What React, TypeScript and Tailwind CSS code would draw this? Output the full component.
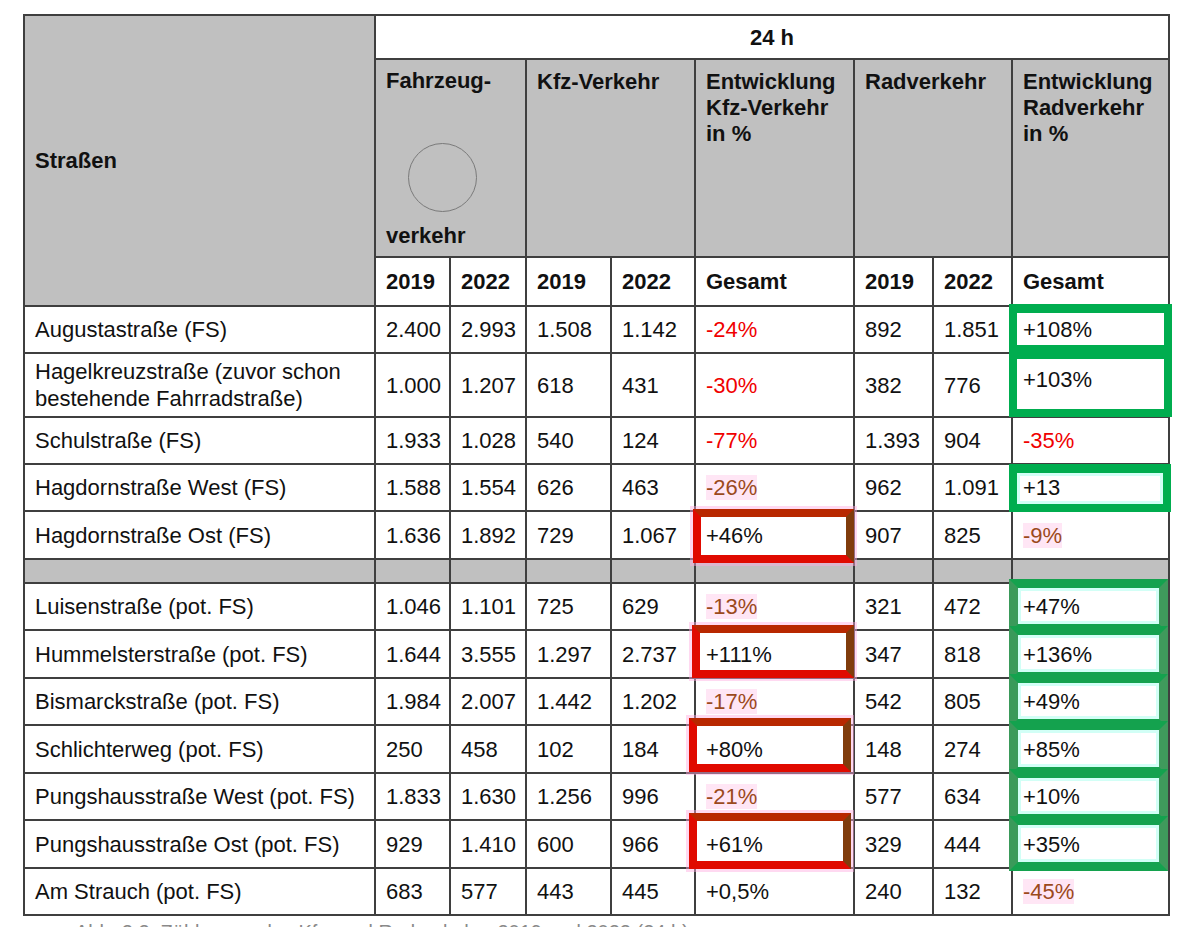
const RED = "text-[#f00000]";
const BROWN = "text-[#9b4a1c] bg-[#ffe6f5]";

const redBox =
  "border-[8px] border-[#e00a00] border-t-[#b82800] border-r-[#803c0c] shadow-[0_0_0_3px_rgba(255,170,225,0.45)]";
const greenBox = "border-[8px] border-t-[9px] border-[#00ad4f]";
const greenGroup =
  "border-[9px] border-[#14a24e] border-l-[#3a9a5a] border-r-[#3f9a5c] shadow-[inset_0_0_0_3px_#d2fff6]";

type Row = {
  name: string;
  vals: string[];
  kfz: string;
  kfzTone?: string;
  kfzBox?: string;
  rad: string[];
  gesamt: string;
  radTone?: string;
  radBox?: string;
  radTop?: boolean;
  h: string;
};

const topRows: Row[] = [
  { name: "Augustastraße (FS)", vals: ["2.400", "2.993", "1.508", "1.142"], kfz: "-24%", kfzTone: RED, rad: ["892", "1.851"], gesamt: "+108%", radBox: `${greenBox} left-[-4px] right-[-4px] top-[-3px] bottom-[-1px]`, h: "h-[47px]" },
  { name: "Hagelkreuzstraße (zuvor schon bestehende Fahrradstraße)", vals: ["1.000", "1.207", "618", "431"], kfz: "-30%", kfzTone: RED, rad: ["382", "776"], gesamt: "+103%", radBox: `${greenBox} left-[-4px] right-[-4px] top-[-4px] bottom-[-1px]`, radTop: true, h: "h-[64px]" },
  { name: "Schulstraße (FS)", vals: ["1.933", "1.028", "540", "124"], kfz: "-77%", kfzTone: RED, rad: ["1.393", "904"], gesamt: "-35%", radTone: RED, h: "h-[47px]" },
  { name: "Hagdornstraße West (FS)", vals: ["1.588", "1.554", "626", "463"], kfz: "-26%", kfzTone: BROWN, rad: ["962", "1.091"], gesamt: "+13", radBox: `${greenBox} left-[-4px] right-[-3px] top-[-1px] bottom-[-2px] shadow-[inset_0_0_0_3px_#d2fff6]`, h: "h-[47px]" },
  { name: "Hagdornstraße Ost (FS)", vals: ["1.636", "1.892", "729", "1.067"], kfz: "+46%", kfzBox: `${redBox} left-[-3px] right-[-1px] top-[-3px] bottom-[-5px]`, rad: ["907", "825"], gesamt: "-9%", radTone: BROWN, h: "h-[48px]" },
];

const bottomRows: Row[] = [
  { name: "Luisenstraße (pot. FS)", vals: ["1.046", "1.101", "725", "629"], kfz: "-13%", kfzTone: BROWN, rad: ["321", "472"], gesamt: "+47%", radBox: `${greenGroup} left-[-4px] right-[0px] top-[-5px] bottom-[-4px]`, h: "h-[47px]" },
  { name: "Hummelsterstraße (pot. FS)", vals: ["1.644", "3.555", "1.297", "2.737"], kfz: "+111%", kfzBox: `${redBox} left-[-4px] right-[-1px] top-[-6px] bottom-[-1px]`, rad: ["347", "818"], gesamt: "+136%", radBox: `${greenGroup} left-[-4px] right-[0px] top-[-5px] bottom-[-4px]`, h: "h-[48px]" },
  { name: "Bismarckstraße (pot. FS)", vals: ["1.984", "2.007", "1.442", "1.202"], kfz: "-17%", kfzTone: BROWN, rad: ["542", "805"], gesamt: "+49%", radBox: `${greenGroup} left-[-4px] right-[0px] top-[-5px] bottom-[-4px]`, h: "h-[47px]" },
  { name: "Schlichterweg (pot. FS)", vals: ["250", "458", "102", "184"], kfz: "+80%", kfzBox: `${redBox} left-[-7px] right-[2px] top-[-8px] bottom-[0px]`, rad: ["148", "274"], gesamt: "+85%", radBox: `${greenGroup} left-[-4px] right-[0px] top-[-5px] bottom-[-4px]`, h: "h-[48px]" },
  { name: "Pungshausstraße West (pot. FS)", vals: ["1.833", "1.630", "1.256", "996"], kfz: "-21%", kfzTone: BROWN, rad: ["577", "634"], gesamt: "+10%", radBox: `${greenGroup} left-[-4px] right-[0px] top-[-5px] bottom-[-4px]`, h: "h-[47px]" },
  { name: "Pungshausstraße Ost (pot. FS)", vals: ["929", "1.410", "600", "966"], kfz: "+61%", kfzBox: `${redBox} left-[-7px] right-[2px] top-[-8px] bottom-[-2px]`, rad: ["329", "444"], gesamt: "+35%", radBox: `${greenGroup} left-[-4px] right-[0px] top-[-5px] bottom-[-4px]`, h: "h-[48px]" },
  { name: "Am Strauch (pot. FS)", vals: ["683", "577", "443", "445"], kfz: "+0,5%", rad: ["240", "132"], gesamt: "-45%", radTone: BROWN, h: "h-[47px]" },
];

const cell = "border-2 border-[#3f3f3f] px-[10px] text-left";
const head = "border-2 border-[#3f3f3f] bg-[#c0c0c0] px-[10px] pt-[9px] text-left align-top font-bold text-[22px] leading-[26px]";

function DataRow({ row }: { row: Row }) {
  return (
    <tr className={row.h}>
      <td className={`${cell} leading-[27px]`}>{row.name}</td>
      {row.vals.map((v, i) => (
        <td key={i} className={cell}>{v}</td>
      ))}
      <td className={`${cell} relative`}>
        {row.kfzBox && <div className={`pointer-events-none absolute ${row.kfzBox}`} />}
        <span className={row.kfzTone}>{row.kfz}</span>
      </td>
      {row.rad.map((v, i) => (
        <td key={i} className={cell}>{v}</td>
      ))}
      <td className={`${cell} relative ${row.radTop ? "align-top pt-[9px]" : ""}`}>
        {row.radBox && <div className={`pointer-events-none absolute ${row.radBox}`} />}
        <span className={row.radTone}>{row.gesamt}</span>
      </td>
    </tr>
  );
}

export default function App() {
  return (
    <div className="min-h-[927px] bg-white pl-[23px] pt-[14px] font-['Liberation_Sans',Arial,sans-serif] text-[22px] text-[#111]">
      <table className="w-[1145px] table-fixed border-collapse">
        <colgroup>
          <col className="w-[351px]" />
          <col className="w-[75px]" />
          <col className="w-[76px]" />
          <col className="w-[85px]" />
          <col className="w-[84px]" />
          <col className="w-[159px]" />
          <col className="w-[79px]" />
          <col className="w-[79px]" />
          <col className="w-[157px]" />
        </colgroup>
        <thead>
          <tr className="h-[44px]">
            <th rowSpan={3} className="border-2 border-[#3f3f3f] bg-[#c0c0c0] px-[10px] text-left align-middle text-[22px] font-bold">
              Straßen
            </th>
            <th colSpan={8} className="border-2 border-[#3f3f3f] text-center text-[22px] font-bold">
              24 h
            </th>
          </tr>
          <tr className="h-[198px]">
            <th colSpan={2} className="border-2 border-[#3f3f3f] bg-[#c0c0c0] p-0 text-left align-top text-[22px] font-bold leading-[26px]">
              <div className="flex h-[196px] flex-col px-[10px] pt-[8px]">
                <span>Fahrzeug-</span>
                <div className="ml-[22px] mt-[49px] h-[69px] w-[69px] rounded-full border border-[#7a7a7a]" />
                <span className="mt-[11px]">verkehr</span>
              </div>
            </th>
            <th colSpan={2} className={head}>Kfz-Verkehr</th>
            <th className={head}>
              Entwicklung
              <br />
              Kfz-Verkehr
              <br />
              in %
            </th>
            <th colSpan={2} className={head}>Radverkehr</th>
            <th className={head}>
              Entwicklung
              <br />
              Radverkehr
              <br />
              in %
            </th>
          </tr>
          <tr className="h-[49px] text-[22px] font-bold">
            <th className={cell}>2019</th>
            <th className={cell}>2022</th>
            <th className={cell}>2019</th>
            <th className={cell}>2022</th>
            <th className={cell}>Gesamt</th>
            <th className={cell}>2019</th>
            <th className={cell}>2022</th>
            <th className={cell}>Gesamt</th>
          </tr>
        </thead>
        <tbody>
          {topRows.map((r) => (
            <DataRow key={r.name} row={r} />
          ))}
          <tr className="h-[24px] bg-[#c0c0c0]">
            {Array.from({ length: 9 }).map((_, i) => (
              <td key={i} className="border-2 border-[#3f3f3f]" />
            ))}
          </tr>
          {bottomRows.map((r) => (
            <DataRow key={r.name} row={r} />
          ))}
        </tbody>
      </table>
      <p className="ml-[52px] mt-[3px] text-[20px] leading-[26px] text-[#8a8a8a]">
        Abb. 2.2: Zählungen des Kfz- und Radverkehrs 2019 und 2022 (24 h)
      </p>
    </div>
  );
}
